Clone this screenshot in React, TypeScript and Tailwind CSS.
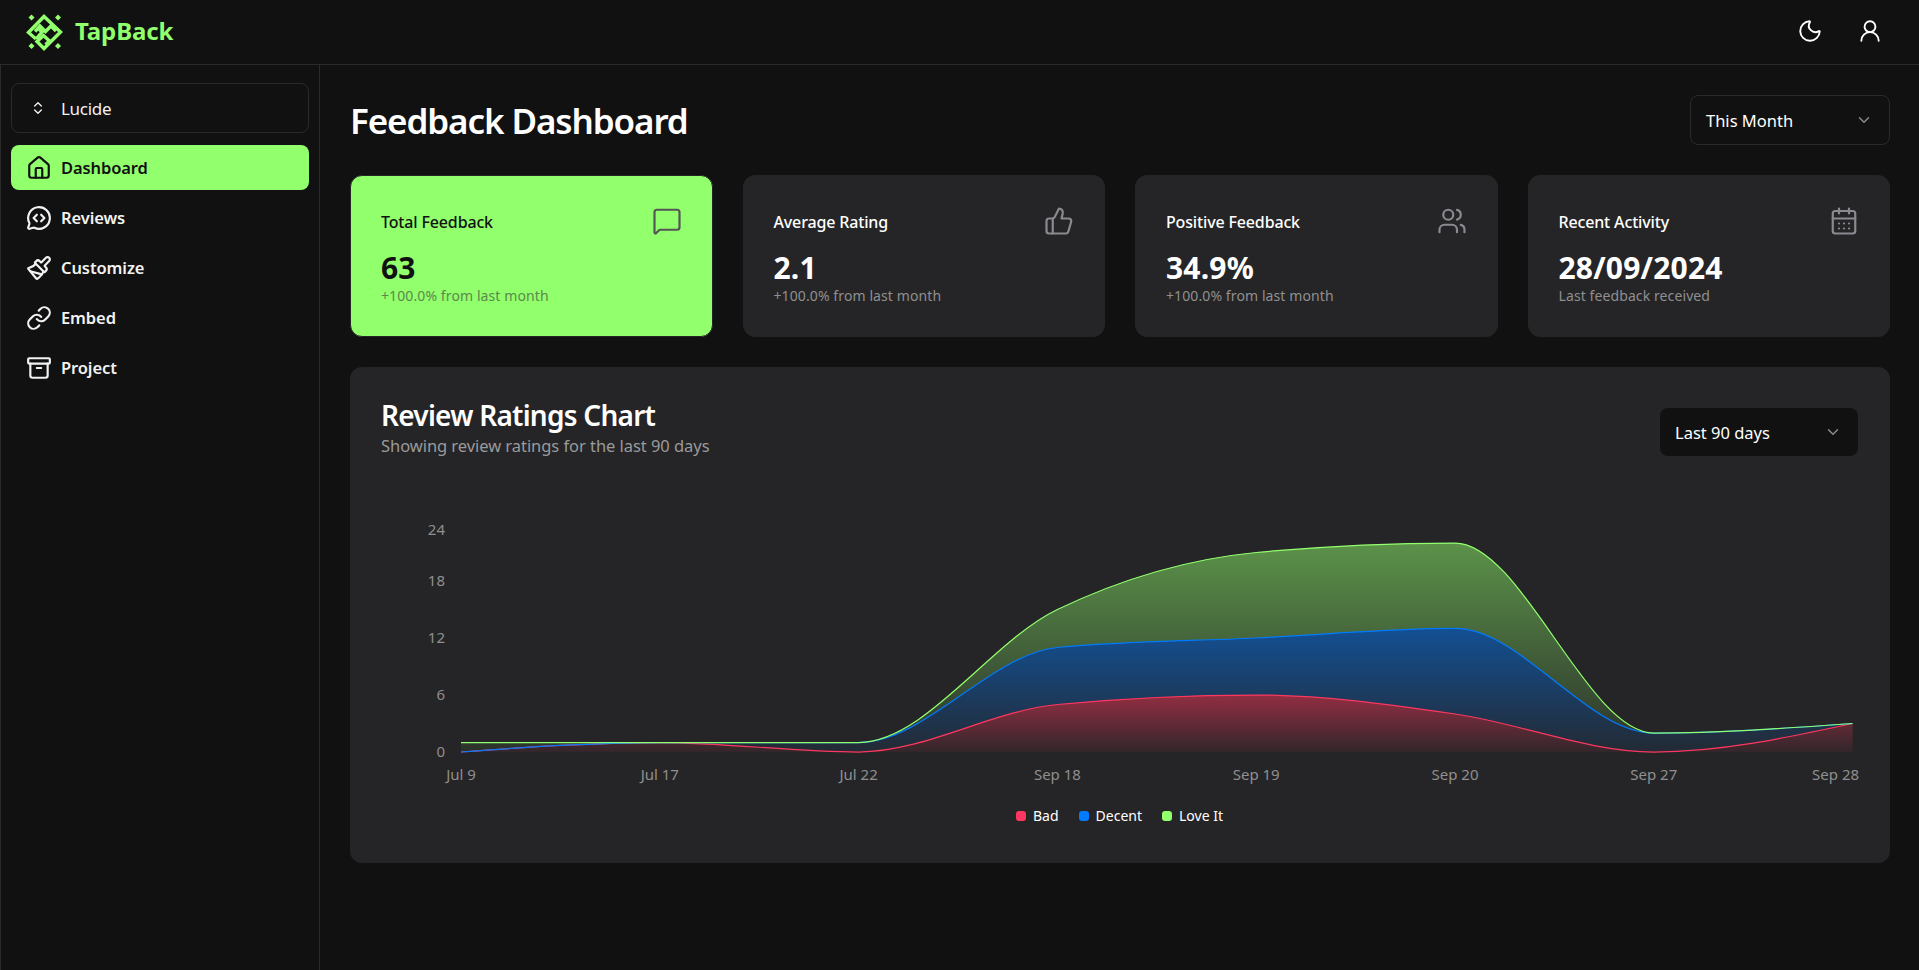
import { Archive, CalendarDays, ChevronDown, ChevronsUpDown, House, Link, MessageCircleCode, MessageSquare, Moon, Paintbrush, ThumbsUp, UserRound, Users } from 'lucide-react'

const NAV = [
  { label: 'Dashboard', icon: House },
  { label: 'Reviews', icon: MessageCircleCode },
  { label: 'Customize', icon: Paintbrush },
  { label: 'Embed', icon: Link },
  { label: 'Project', icon: Archive },
]

const STATS = [
  { title: 'Total Feedback', value: '63', sub: '+100.0% from last month', icon: MessageSquare, active: true },
  { title: 'Average Rating', value: '2.1', sub: '+100.0% from last month', icon: ThumbsUp },
  { title: 'Positive Feedback', value: '34.9%', sub: '+100.0% from last month', icon: Users },
  { title: 'Recent Activity', value: '28/09/2024', sub: 'Last feedback received', icon: CalendarDays },
]

const DATES = ['Jul 9', 'Jul 17', 'Jul 22', 'Sep 18', 'Sep 19', 'Sep 20', 'Sep 27', 'Sep 28']
const BAD = [0, 1, 0, 5, 6, 4, 0, 3]
const DECENT = [0, 1, 1, 11, 12, 13, 2, 3]
const LOVE = [1, 1, 1, 15, 21, 22, 2, 3]

const X_START = 80
const X_STEP = 198.8
const BASE_Y = 243
const UNIT = 9.5

const toPoints = (vals: number[]) => vals.map((v, i): [number, number] => [X_START + i * X_STEP, BASE_Y - v * UNIT])

// same maths as d3 curveMonotoneX
function tangents(pts: [number, number][]) {
  const n = pts.length
  const slopes: number[] = []
  for (let i = 0; i < n - 1; i++) slopes.push((pts[i + 1][1] - pts[i][1]) / (pts[i + 1][0] - pts[i][0]))
  const t: number[] = new Array(n).fill(0)
  for (let i = 1; i < n - 1; i++) {
    const s0 = slopes[i - 1]
    const s1 = slopes[i]
    const p = (s0 + s1) / 2
    t[i] = (Math.sign(s0) + Math.sign(s1)) * Math.min(Math.abs(s0), Math.abs(s1), 0.5 * Math.abs(p)) || 0
  }
  t[0] = (3 * slopes[0] - t[1]) / 2
  t[n - 1] = (3 * slopes[n - 2] - t[n - 2]) / 2
  return t
}

function curve(pts: [number, number][]) {
  const t = tangents(pts)
  let d = ''
  for (let i = 0; i < pts.length - 1; i++) {
    const dx = (pts[i + 1][0] - pts[i][0]) / 3
    d += `C${pts[i][0] + dx},${pts[i][1] + dx * t[i]} ${pts[i + 1][0] - dx},${pts[i + 1][1] - dx * t[i + 1]} ${pts[i + 1][0]},${pts[i + 1][1]}`
  }
  return d
}

function linePath(vals: number[]) {
  const pts = toPoints(vals)
  return `M${pts[0][0]},${pts[0][1]}` + curve(pts)
}

function areaPath(top: number[], bottom: number[] | null) {
  const pts = toPoints(top)
  const last = pts[pts.length - 1]
  const first = pts[0]
  if (!bottom) return `M${first[0]},${first[1]}${curve(pts)}L${last[0]},${BASE_Y}L${first[0]},${BASE_Y}Z`
  const back = toPoints(bottom).reverse()
  return `M${first[0]},${first[1]}${curve(pts)}L${back[0][0]},${back[0][1]}${curve(back)}Z`
}

function Logo() {
  return (
    <svg width="44" height="42" viewBox="0 0 44 42" fill="none" stroke="#92ff6c" strokeWidth="3.4" className="shrink-0">
      <path d="M14 28 6.500 21.500 22 5.500 38.500 21 22 37.500 15 30.500 21.500 24.500 27.500 30 23.500 33.500" />
      <path d="M14 28 20 21 16 17 M13 20.500 18 15 23.500 20.500 29 15 34 20" />
      <g fill="#92ff6c" stroke="none">
        <path d="M9.500 3.500 12.500 6.500 9.500 9.500 6.500 6.500Z" />
        <path d="M36 3.500 39 6.500 36 9.500 33 6.500Z" />
        <path d="M9.500 32 12.500 35 9.500 38 6.500 35Z" />
        <path d="M36 32 39 35 36 38 33 35Z" />
      </g>
    </svg>
  )
}

function SelectBox({ label, className }: { label: string; className: string }) {
  return (
    <div className={`flex items-center justify-between rounded-lg pl-[15px] pr-[16px] text-[16.500px] text-white ${className}`}>
      <span className="translate-y-[1px]">{label}</span>
      <ChevronDown size={18} className="text-[#8a8a8a]" />
    </div>
  )
}

function Chart() {
  return (
    <svg width="1478" height="290" className="block overflow-visible">
      <defs>
        <linearGradient id="fillBad" x1="0" y1="0" x2="0" y2="1">
          <stop offset="0%" stopColor="#ff375f" stopOpacity="0.5" />
          <stop offset="100%" stopColor="#ff375f" stopOpacity="0.06" />
        </linearGradient>
        <linearGradient id="fillDecent" x1="0" y1="0" x2="0" y2="1">
          <stop offset="0%" stopColor="#007aff" stopOpacity="0.5" />
          <stop offset="100%" stopColor="#007aff" stopOpacity="0.06" />
        </linearGradient>
        <linearGradient id="fillLove" x1="0" y1="0" x2="0" y2="1">
          <stop offset="0%" stopColor="#92ff6c" stopOpacity="0.5" />
          <stop offset="100%" stopColor="#92ff6c" stopOpacity="0.06" />
        </linearGradient>
      </defs>
      <path d={areaPath(BAD, null)} fill="url(#fillBad)" />
      <path d={areaPath(DECENT, BAD)} fill="url(#fillDecent)" />
      <path d={areaPath(LOVE, DECENT)} fill="url(#fillLove)" />
      <path d={linePath(BAD)} fill="none" stroke="#ff375f" strokeWidth="1.25" />
      <path d={linePath(DECENT)} fill="none" stroke="#007aff" strokeWidth="1.25" />
      <path d={linePath(LOVE)} fill="none" stroke="#92ff6c" strokeWidth="1.25" />
      <g fill="#8f8f8f" fontSize="15" textAnchor="end">
        <text x="64" y="26">24</text>
        <text x="64" y="77">18</text>
        <text x="64" y="134">12</text>
        <text x="64" y="191">6</text>
        <text x="64" y="248">0</text>
      </g>
      <g fill="#8f8f8f" fontSize="15" textAnchor="middle">
        {DATES.map((d, i) => (
          <text key={d} x={i === 7 ? X_START + i * X_STEP - 17 : X_START + i * X_STEP} y="271">
            {d}
          </text>
        ))}
      </g>
    </svg>
  )
}

export default function App() {
  return (
    <div className="flex h-[970px] flex-col overflow-hidden bg-[#111111] font-['Noto_Sans','Open_Sans',sans-serif] text-white">
      {/* Header */}
      <header className="flex h-[65px] shrink-0 items-center justify-between border-b border-[#2a2a2a] pl-[22px] pr-[36px]">
        <div className="flex items-center gap-[9px]">
          <Logo />
          <span className="-translate-y-[1px] text-[24px] font-bold tracking-[-0.1px] text-[#92ff6c]">TapBack</span>
        </div>
        <div className="flex -translate-y-[1px] items-center gap-[34px]">
          <Moon size={26} strokeWidth={1.75} />
          <UserRound size={26} strokeWidth={1.75} />
        </div>
      </header>

      <div className="flex min-h-0 flex-1">
        {/* Sidebar */}
        <aside className="w-[320px] shrink-0 border-x border-[#2a2a2a] pl-[10px] pr-[10px] pt-[18px]">
          <div className="flex h-[50px] w-[298px] items-center gap-[15px] rounded-lg border border-[#2a2a2a] pl-[18px] text-[17px] tracking-[-0.3px] text-[#f2f2f2]">
            <ChevronsUpDown size={16} />
            <span className="translate-y-[1px]">Lucide</span>
          </div>
          <nav className="mt-[12px] flex flex-col gap-[5px]">
            {NAV.map(({ label, icon: Icon }, i) => (
              <div
                key={label}
                className={`flex h-[45px] w-[298px] items-center gap-[9px] rounded-lg pl-[15px] text-[16.500px] font-semibold tracking-[-0.1px] ${
                  i === 0 ? 'bg-[#92ff6c] font-medium text-[#111111]' : 'text-[#f2f2f2]'
                }`}
              >
                <Icon size={26} strokeWidth={2} />
                <span className="translate-y-[1px]">{label}</span>
              </div>
            ))}
          </nav>
        </aside>

        {/* Main */}
        <main className="min-w-0 flex-1 pl-[30px] pr-[29px] pt-[30px]">
          <div className="flex h-[50px] items-center justify-between">
            <h1 className="translate-y-[1px] text-[35px] font-semibold tracking-[-1.1px]">Feedback Dashboard</h1>
            <SelectBox label="This Month" className="h-[50px] w-[200px] border border-[#2a2a2a]" />
          </div>

          <div className="mt-[30px] grid grid-cols-4 gap-[30px]">
            {STATS.map(({ title, value, sub, icon: Icon, active }) => (
              <div
                key={title}
                className={`h-[162px] rounded-xl border border-[#252527] pl-[30px] pr-[30px] pt-[30px] ${
                  active ? 'bg-[#92ff6c] text-[#111111]' : 'bg-[#252527] text-white'
                }`}
              >
                <div className="flex h-[30px] items-center justify-between">
                  <span className="translate-y-[1px] text-[16px] font-medium tracking-[-0.15px]">{title}</span>
                  <Icon size={30} strokeWidth={1.75} className={active ? 'text-[#555555]' : 'text-[#8a8a90]'} />
                </div>
                <div className="mt-[14px] text-[30px] font-bold leading-[36px] tracking-[0.2px]">{value}</div>
                <div className={`-mt-[2px] text-[14px] leading-[24px] tracking-[0.1px] ${active ? 'text-[#5c8a4c]' : 'text-[#8f8f8f]'}`}>{sub}</div>
              </div>
            ))}
          </div>

          <section className="mt-[30px] h-[496px] rounded-xl bg-[#252527] pl-[31px] pr-[32px] pt-[30px]">
            <div className="flex items-start justify-between">
              <div>
                <h2 className="text-[28px] font-semibold leading-[36px] tracking-[-0.75px]">Review Ratings Chart</h2>
                <p className="text-[16.500px] leading-[26px] tracking-[-0.05px] text-[#9a9a9a]">Showing review ratings for the last 90 days</p>
              </div>
              <SelectBox label="Last 90 days" className="mt-[11px] h-[48px] w-[198px] bg-[#111111]" />
            </div>
            <div className="mt-[50px]">
              <Chart />
            </div>
            <div className="mt-[6px] flex items-center justify-center gap-[20px] text-[14px] text-white">
              <div className="flex items-center gap-[7px]">
                <span className="size-[10px] rounded-[3px] bg-[#ff375f]" />
                Bad
              </div>
              <div className="flex items-center gap-[7px]">
                <span className="size-[10px] rounded-[3px] bg-[#007aff]" />
                Decent
              </div>
              <div className="flex items-center gap-[7px]">
                <span className="size-[10px] rounded-[3px] bg-[#92ff6c]" />
                Love It
              </div>
            </div>
          </section>
        </main>
      </div>
    </div>
  )
}
